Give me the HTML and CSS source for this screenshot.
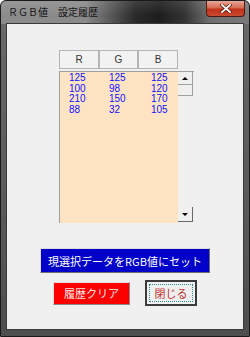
FILE: index.html
```html
<!DOCTYPE html>
<html lang="ja">
<head>
<meta charset="utf-8">
<link rel="stylesheet" href="styles.css">
</head>
<body>
<div class="window">
  <div class="titlebar">
    <span class="title">ＲＧＢ値　設定履歴</span>
    <div class="close-x">
      <svg width="12" height="9" viewBox="0 0 12 9">
        <path d="M2 1 L10 8 M10 1 L2 8" stroke="#5a1a10" stroke-width="3.4" stroke-linecap="square" fill="none"/>
        <path d="M2 1 L10 8 M10 1 L2 8" stroke="#ffffff" stroke-width="1.8" stroke-linecap="square" fill="none"/>
      </svg>
    </div>
  </div>
  <div class="client">
    <div class="header-row">
      <div class="hcell w40">R</div>
      <div class="hcell w39">G</div>
      <div class="hcell w40">B</div>
    </div>
    <div class="listbox">
      <div class="list-items">
        <div class="row"><span>125</span><span>125</span><span>125</span></div>
        <div class="row"><span>100</span><span>98</span><span>120</span></div>
        <div class="row"><span>210</span><span>150</span><span>170</span></div>
        <div class="row"><span>88</span><span>32</span><span>105</span></div>
      </div>
      <div class="scrollbar">
        <div class="sb-btn up"><span class="arrow-up"></span></div>
        <div class="sb-thumb"></div>
        <div class="sb-track"></div>
        <div class="sb-btn down"><span class="arrow-down"></span></div>
      </div>
    </div>
    <button class="btn-set">現選択データをRGB値にセット</button>
    <div class="btn-row">
      <button class="btn-clear">履歴クリア</button>
      <button class="btn-close"><span class="focus">閉じる</span></button>
    </div>
  </div>
</div>
</body>
</html>
```

FILE: styles.css
```css
html, body {
  margin: 0;
  padding: 0;
  background: #ffffff;
}

.window {
  width: 250px;
  height: 337px;
  box-sizing: border-box;
  border: 1px solid #1a1a1a;
  border-radius: 6px 6px 0 0;
  padding: 0 5px 6px 5px;
  display: flex;
  flex-direction: column;
  background:
    linear-gradient(to bottom, rgba(255,255,255,0.10), rgba(255,255,255,0) 60%) 0 0 / 100% 23px no-repeat,
    linear-gradient(to right, #8c8c8c 0%, #8a8a8a 34%, #5a5a5a 44%, #2a2a2a 54%, #1e1e1e 64%, #333 74%, #6e6e6e 84%, #7a7a7a 100%) 0 0 / 100% 23px no-repeat,
    linear-gradient(to bottom, #6a6a6a, #4e4e4e);
}

.titlebar {
  height: 22px;
  margin: 0 -5px;
  display: flex;
  justify-content: space-between;
  align-items: flex-start;
}

.title {
  margin: 5px 0 0 7px;
  font-family: "Noto Sans CJK JP", sans-serif;
  font-size: 10px;
  line-height: 12px;
  color: #141414;
}

.close-x {
  width: 39px;
  height: 16px;
  margin-right: 4px;
  box-sizing: border-box;
  border: 1px solid #4a1c14;
  border-top: none;
  border-radius: 0 0 4px 4px;
  background: linear-gradient(to bottom, #e8a898 0%, #d76a52 45%, #c2321a 55%, #c84a2e 100%);
  display: flex;
  align-items: center;
  justify-content: center;
}

.close-x svg { display: block; }

.client {
  flex: 1;
  background: #f0f0f0;
  border: 1px solid #3a3a3a;
  display: flex;
  flex-direction: column;
  align-items: flex-start;
  font-family: "Liberation Sans", Arial, sans-serif;
}

.header-row {
  display: flex;
  margin: 26px 0 0 52px;
}

.hcell {
  height: 19px;
  box-sizing: border-box;
  border: 1px solid #b4b4b4;
  background: #f2f2f2;
  font-size: 10px;
  line-height: 17px;
  text-align: center;
  color: #333;
}

.w40 { width: 40px; }
.w39 { width: 39px; }

.listbox {
  margin: 2px 0 0 52px;
  width: 135px;
  height: 152px;
  box-sizing: border-box;
  border-top: 1px solid #a0a0a0;
  border-left: 1px solid #a0a0a0;
  display: flex;
}

.list-items {
  width: 118px;
  background: #ffe4c4;
  padding-top: 1px;
  box-sizing: border-box;
}

.row {
  display: grid;
  grid-template-columns: 40px 42px 1fr;
  padding-left: 9px;
  font-size: 10px;
  line-height: 10.67px;
  color: #1010ff;
}

.scrollbar {
  width: 16px;
  display: flex;
  flex-direction: column;
}

.sb-btn {
  width: 15px;
  box-sizing: border-box;
  background: #f0f0f0;
  border-right: 1px solid #6a6a6a;
  border-bottom: 1px solid #6a6a6a;
  display: flex;
  align-items: center;
  justify-content: center;
}

.sb-btn.up {
  height: 13px;
  border-right-color: #a0a0a0;
  border-bottom-color: #a0a0a0;
}
.sb-btn.down {
  height: 15px;
  margin-bottom: 1px;
}

.sb-thumb {
  width: 15px;
  height: 11px;
  box-sizing: border-box;
  border-right: 1px solid #a0a0a0;
  border-bottom: 1px solid #a0a0a0;
}

.sb-track { flex: 1; }

.arrow-up {
  width: 0; height: 0;
  border-left: 3px solid transparent;
  border-right: 3px solid transparent;
  border-bottom: 3px solid #000;
}
.arrow-down {
  width: 0; height: 0;
  border-left: 3px solid transparent;
  border-right: 3px solid transparent;
  border-top: 3px solid #000;
}

button {
  margin: 0;
  padding: 0;
  font-family: "Noto Sans CJK JP", sans-serif;
  cursor: default;
}

.btn-set {
  margin: 25px 0 0 33px;
  width: 170px;
  height: 25px;
  box-sizing: border-box;
  background: #0000c8;
  border: 1px solid;
  border-color: #dcdcdc #6e6e6e #6e6e6e #dcdcdc;
  color: #ffffff;
  font-size: 11px;
  line-height: 22px;
}

.btn-row {
  display: flex;
  align-items: center;
  gap: 15px;
  margin: 7px 0 0 46px;
}

.btn-clear {
  width: 77px;
  height: 23px;
  box-sizing: border-box;
  background: #ff0000;
  border: 1px solid;
  border-color: #e0e0e0 #8a8a8a #8a8a8a #e0e0e0;
  color: #ffe8e8;
  font-size: 11px;
  line-height: 20px;
}

.btn-close {
  width: 52px;
  height: 26px;
  box-sizing: border-box;
  background: #f0f0f0;
  border: 2px solid #3c3c3c;
  padding: 2px;
  display: flex;
}

.focus {
  flex: 1;
  border: 1px dotted #2a8a8a;
  color: #c03030;
  font-size: 11px;
  line-height: 16px;
  text-align: center;
}
```
